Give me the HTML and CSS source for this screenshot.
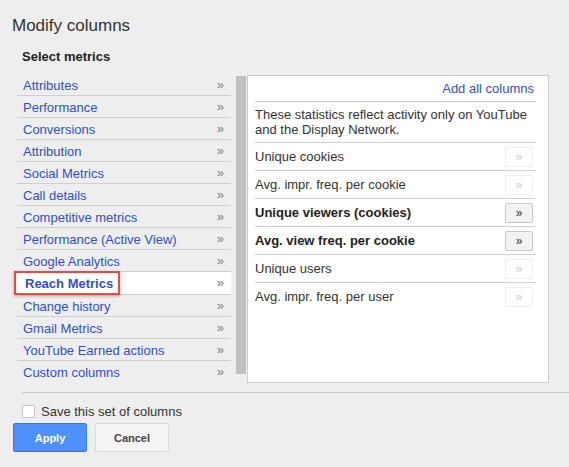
FILE: index.html
```html
<!DOCTYPE html>
<html lang="en">
<head>
    <meta charset="UTF-8">
    <title>Modify columns</title>
    <link rel="stylesheet" href="styles.css">
</head>
<body>
    <h1 class="title">Modify columns</h1>
    <div class="section-label">Select metrics</div>

    <div class="picker">
        <ul class="groups">
            <li><a href="#">Attributes</a><span class="more">»</span></li>
            <li><a href="#">Performance</a><span class="more">»</span></li>
            <li><a href="#">Conversions</a><span class="more">»</span></li>
            <li><a href="#">Attribution</a><span class="more">»</span></li>
            <li><a href="#">Social Metrics</a><span class="more">»</span></li>
            <li><a href="#">Call details</a><span class="more">»</span></li>
            <li><a href="#">Competitive metrics</a><span class="more">»</span></li>
            <li><a href="#">Performance (Active View)</a><span class="more">»</span></li>
            <li><a href="#">Google Analytics</a><span class="more">»</span></li>
            <li class="active"><span class="mark"></span><a href="#">Reach Metrics</a><span class="more">»</span></li>
            <li><a href="#">Change history</a><span class="more">»</span></li>
            <li><a href="#">Gmail Metrics</a><span class="more">»</span></li>
            <li><a href="#">YouTube Earned actions</a><span class="more">»</span></li>
            <li><a href="#">Custom columns</a><span class="more">»</span></li>
        </ul>

        <div class="scrollbar"></div>

        <div class="panel">
            <div class="panel-head"><a href="#">Add all columns</a></div>
            <div class="desc">These statistics reflect activity only on YouTube and the Display Network.</div>
            <div class="metric"><span>Unique cookies</span><button class="add" disabled>»</button></div>
            <div class="metric"><span>Avg. impr. freq. per cookie</span><button class="add" disabled>»</button></div>
            <div class="metric strong"><span>Unique viewers (cookies)</span><button class="add">»</button></div>
            <div class="metric strong"><span>Avg. view freq. per cookie</span><button class="add">»</button></div>
            <div class="metric"><span>Unique users</span><button class="add" disabled>»</button></div>
            <div class="metric last"><span>Avg. impr. freq. per user</span><button class="add" disabled>»</button></div>
        </div>
    </div>

    <div class="divider"></div>

    <label class="save-row">
        <span class="checkbox"></span>
        Save this set of columns
    </label>

    <div class="actions">
        <button class="btn btn-primary">Apply</button>
        <button class="btn">Cancel</button>
    </div>
</body>
</html>
```

FILE: styles.css
```css
/* page */
body {
    margin: 0;
    background-color: #eeeeee;
    font-family: "Liberation Sans", Arial, sans-serif;
    font-size: 13px;
    color: #222;
}

a {
    color: #2f4fd6;
    text-decoration: none;
}

.title {
    margin: 0;
    padding: 16px 12px 0;
    font-size: 17px;
    font-weight: normal;
    line-height: 20px;
    color: #333;
}

.section-label {
    margin: 12px 0 0 22px;
    font-weight: bold;
    line-height: 18px;
    color: #222;
}

/* picker: groups + scrollbar + metrics panel */
.picker {
    display: flex;
    align-items: flex-start;
    margin: 8px 0 0 17px;
}

.groups {
    list-style: none;
    margin: 0;
    padding: 0;
    width: 214px;
}

.groups li {
    position: relative;
    display: flex;
    align-items: center;
    justify-content: space-between;
    height: 20px;
    padding: 1px 7px 0 6px;
    border-bottom: 1px solid #cfcfcf;
}

.groups li:last-child {
    border-bottom: none;
}

.groups li.active {
    height: 21px;
    background-color: #fff;
}

.groups li.active a {
    font-weight: bold;
    padding-left: 2px;
}

.groups .more {
    font-size: 13px;
    line-height: 1;
    margin-bottom: 2px;
    color: #808080;
}

/* red annotation box */
.mark {
    position: absolute;
    left: -3px;
    top: -1px;
    width: 102px;
    height: 20px;
    border: 2px solid #ea4a42;
    box-shadow: 0 1px 3px rgba(0, 0, 0, 0.3);
}

.scrollbar {
    width: 10px;
    height: 298px;
    margin: 2px 0 0 5px;
    background-color: #c1c1c1;
}

.panel {
    box-sizing: border-box;
    width: 302px;
    height: 308px;
    margin: 1px 0 0 1px;
    padding: 0 12px 0 7px;
    background-color: #fff;
    border: 1px solid #cccccc;
}

.panel-head {
    height: 25px;
    line-height: 26px;
    text-align: right;
    padding-right: 2px;
    border-bottom: 1px solid #cfcfcf;
}

.desc {
    padding: 5px 0;
    line-height: 15px;
    color: #333;
    border-bottom: 1px solid #cfcfcf;
}

.metric {
    display: flex;
    align-items: center;
    justify-content: space-between;
    height: 27px;
    border-bottom: 1px solid #cfcfcf;
    color: #333;
}

.metric.last {
    border-bottom: none;
}

.metric.strong {
    font-weight: bold;
    color: #222;
}

.add {
    width: 28px;
    height: 20px;
    margin-right: 3px;
    padding: 0;
    font-family: "Liberation Sans", Arial, sans-serif;
    font-size: 12px;
    font-weight: normal;
    color: #333;
    background-color: #f3f3f3;
    border: 1px solid #c8c8c8;
    border-radius: 2px;
}

.add:disabled {
    color: #cccccc;
    background-color: #fff;
    border-color: #eeeeee;
}

/* footer */
.divider {
    margin: 9px 0 0 22px;
    border-top: 1px solid #cccccc;
}

.save-row {
    display: flex;
    align-items: center;
    height: 18px;
    margin: 9px 0 0 22px;
    color: #333;
}

.checkbox {
    box-sizing: border-box;
    width: 13px;
    height: 13px;
    margin-right: 6px;
    background-color: #fff;
    border: 1px solid #c6c6c6;
    border-radius: 1px;
}

.actions {
    display: flex;
    gap: 8px;
    margin: 3px 0 0 13px;
}

.btn {
    width: 74px;
    height: 29px;
    font-family: "Liberation Sans", Arial, sans-serif;
    font-size: 11px;
    font-weight: bold;
    color: #444;
    background-color: #f5f5f5;
    border: 1px solid #dcdcdc;
    border-radius: 2px;
}

.btn-primary {
    color: #fff;
    background-color: #4d90fe;
    border-color: #3079ed;
}
```
